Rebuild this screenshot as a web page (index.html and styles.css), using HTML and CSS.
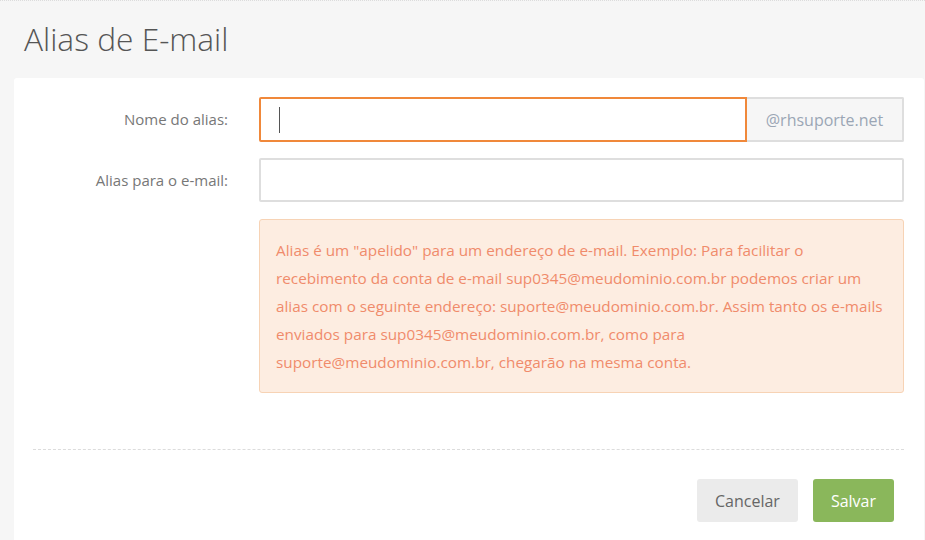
FILE: index.html
```html
<!DOCTYPE html>
<html lang="pt-BR">
<head>
<meta charset="utf-8">
<title>Alias de E-mail</title>
<link rel="stylesheet" href="styles.css">
</head>
<body>
<div class="page">
  <h1 class="title">Alias de E-mail</h1>
  <div class="panel">
    <form class="form">
      <label class="label" for="nome">Nome do alias:</label>
      <div class="input-group">
        <div class="input input-focus" id="nome"><span class="caret"></span></div>
        <span class="addon">@rhsuporte.net</span>
      </div>
      <label class="label" for="para">Alias para o e-mail:</label>
      <div class="input" id="para"></div>
      <div class="spacer"></div>
      <div class="alert">Alias é um "apelido" para um endereço de e-mail. Exemplo: Para facilitar o recebimento da conta de e-mail sup0345@meudominio.com.br podemos criar um alias com o seguinte endereço: suporte@meudominio.com.br. Assim tanto os e-mails enviados para sup0345@meudominio.com.br, como para suporte@meudominio.com.br, chegarão na mesma conta.</div>
    </form>
    <div class="divider"></div>
    <div class="actions">
      <button type="button" class="btn btn-cancel">Cancelar</button>
      <button type="button" class="btn btn-save">Salvar</button>
    </div>
  </div>
</div>
</body>
</html>
```

FILE: styles.css
```css
html, body {
  margin: 0;
  padding: 0;
  height: 100%;
  overflow: hidden;
}
body {
  background: #f6f6f6;
  font-family: "Open Sans", "Liberation Sans", sans-serif;
  border-top: 1px dotted #dcdcdc;
  box-sizing: border-box;
}
.page {
  padding: 0 1px 0 14px;
}
.title {
  margin: 0;
  padding: 18px 0 0 10px;
  height: 77px;
  box-sizing: border-box;
  font-weight: 300;
  font-size: 31.7px;
  line-height: 40px;
  color: #555;
}
.panel {
  background: #fff;
  border-radius: 3px 3px 0 0;
  padding: 19px 20px 0 0;
  height: 462px;
  box-sizing: border-box;
}
.form {
  display: grid;
  grid-template-columns: 214px 1fr;
  column-gap: 31px;
  row-gap: 16px;
}
.label {
  text-align: right;
  font-size: 15px;
  color: #777;
  line-height: 45px;
}
.input-group {
  display: flex;
  height: 45px;
}
.input {
  height: 44px;
  box-sizing: border-box;
  border: 2px solid #dedede;
  border-radius: 2px;
  background: #fff;
}
.input-group .input {
  flex: 1;
  height: 45px;
  border-radius: 2px 0 0 2px;
}
.input-focus {
  border-color: #f0883a;
  display: flex;
  align-items: center;
  padding-left: 18px;
}
.caret {
  display: block;
  width: 1px;
  height: 26px;
  background: #555;
}
.addon {
  width: 157px;
  box-sizing: border-box;
  border: 2px solid #dedede;
  border-left: 0;
  border-radius: 0 2px 2px 0;
  background: #f6f6f6;
  color: #9ba6b5;
  font-size: 16px;
  display: flex;
  align-items: center;
  justify-content: center;
}
.alert {
  background: #fdede1;
  border: 1px solid #f7d3b5;
  border-radius: 3px;
  color: #f08b6b;
  font-size: 15.3px;
  line-height: 28px;
  padding: 16px 16px 16px 16px;
}
.divider {
  margin: 56px 0 0 19px;
  border-top: 1px dashed #dcdcdc;
}
.actions {
  display: flex;
  justify-content: flex-end;
  gap: 15px;
  padding: 29px 10px 0 0;
}
.btn {
  height: 43px;
  border: 0;
  border-radius: 3px;
  font-family: "Open Sans", "Liberation Sans", sans-serif;
  font-size: 16px;
  padding: 0 18px;
  cursor: pointer;
}
.btn-cancel {
  background: #ebebeb;
  color: #666;
}
.btn-save {
  background: #8ab75b;
  color: #fff;
}
```
